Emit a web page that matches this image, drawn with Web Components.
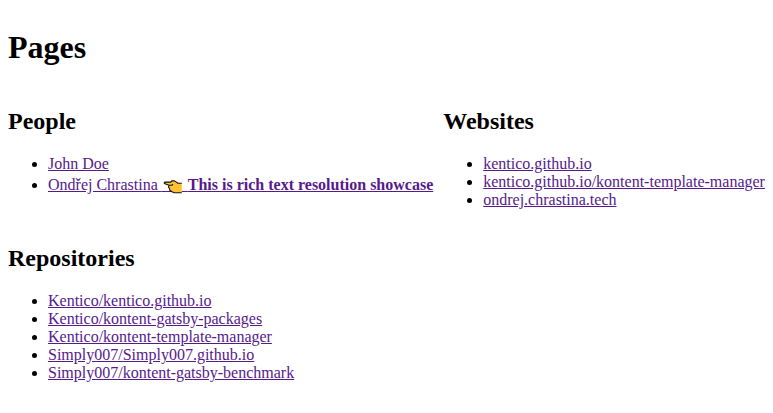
<!DOCTYPE html>
<html lang="en"><head><meta charset="utf-8"><title>Pages</title>
<style>body{margin:8px;background:#fff;color:#000;font:16px/18px "Liberation Serif","Times New Roman",serif}</style></head><body>
<pages-view></pages-view>
<script>
class PointingHand extends HTMLElement{
 constructor(){super();this.attachShadow({mode:'open'}).innerHTML=`<style>:host{display:inline-block;width:22px;height:22px;vertical-align:-5px}svg{display:block}</style>
<svg width="22" height="22" viewBox="0 0 22 22"><path d="M0 18.500H22" stroke="#551a8b"/><path d="M3 9.100H8.800L9.800 7.900H12.500L16 10.300H19.800V19.700H12.200L10 18.800L7.800 17.300L7.500 15.500L6.500 14.200L7 12.200L3 10.800C2 10.500 2 9.300 3 9.100Z" fill="#ffc233"/><path d="M19.800 10.300H16L12.500 7.900H9.800L8.800 9.100H3C2 9.300 2 10.500 3 10.800L7 12.200L6.500 14.200L7.500 15.500L7.800 17.300L10 18.800L12.200 19.700H19.800M7 12.200H9.800L11 11.300" fill="none" stroke="#111" stroke-width="1.100" stroke-linejoin="round"/></svg>`}}
customElements.define('pointing-hand',PointingHand);
class PageLink extends HTMLElement{
 constructor(){super();this.attachShadow({mode:'open'}).innerHTML=`<style>:host{display:list-item;list-style:disc}a{color:#551a8b;text-decoration:underline}</style><a href="#"><slot></slot></a>`}}
customElements.define('page-link',PageLink);
class LinkSection extends HTMLElement{
 constructor(){super();this.attachShadow({mode:'open'}).innerHTML=`<style>:host{display:block;white-space:nowrap}h2{font-size:24px;line-height:27px;margin:20px 0}.list{padding-left:40px;margin:16px 0}</style><h2>${this.getAttribute('heading')}</h2><div class="list"><slot></slot></div>`}}
customElements.define('link-section',LinkSection);
class PagesView extends HTMLElement{
 constructor(){super();this.attachShadow({mode:'open'}).innerHTML=`<style>:host{display:block}h1{font-size:32px;line-height:36px;margin:21px 0 23px}.grid{display:grid;grid-template-columns:max-content max-content;column-gap:10px;row-gap:0}</style>
<h1>Pages</h1><div class="grid">
<link-section heading="People"><page-link>John Doe</page-link><page-link>Ondřej Chrastina <pointing-hand></pointing-hand> <strong>This is rich text resolution showcase</strong></page-link></link-section>
<link-section heading="Websites"><page-link>kentico.github.io</page-link><page-link>kentico.github.io/kontent-template-manager</page-link><page-link>ondrej.chrastina.tech</page-link></link-section>
<link-section heading="Repositories"><page-link>Kentico/kentico.github.io</page-link><page-link>Kentico/kontent-gatsby-packages</page-link><page-link>Kentico/kontent-template-manager</page-link><page-link>Simply007/Simply007.github.io</page-link><page-link>Simply007/kontent-gatsby-benchmark</page-link></link-section>
</div>`}}
customElements.define('pages-view',PagesView);
</script></body></html>
